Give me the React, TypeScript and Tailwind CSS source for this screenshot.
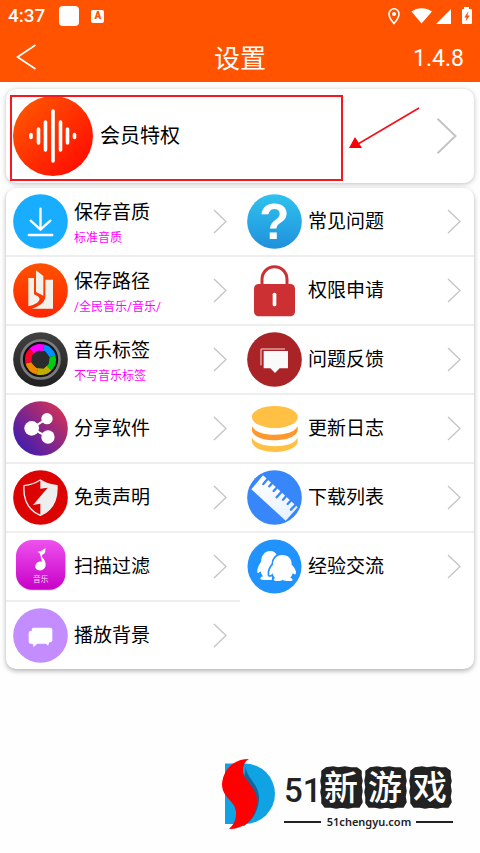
import type { ReactNode } from "react";

const cjk = "font-['Roboto','Noto_Sans_CJK_SC',sans-serif]";

function Svg({ children }: { children: ReactNode }) {
  return (
    <svg viewBox="0 0 165 165" className="size-[55px] shrink-0 overflow-visible" aria-hidden="true">
      {children}
    </svg>
  );
}

function Chevron({ className }: { className: string }) {
  return (
    <svg viewBox="0 0 14 25" className={className} fill="none" stroke="#c4c4c4" strokeWidth="1.3" aria-hidden="true">
      <path d="M1 1 L13 12.5 L1 24" />
    </svg>
  );
}

function DownloadIcon() {
  return (
    <Svg>
      <circle cx="82.5" cy="82.5" r="82" fill="#18adff" />
      <g fill="none" stroke="#fff" strokeWidth="7" strokeLinecap="round" strokeLinejoin="round">
        <path d="M82.500 44 V106 M53 80 L82.500 107 L112 80" />
        <path d="M47 123 H118" />
      </g>
    </Svg>
  );
}

function BookIcon() {
  return (
    <Svg>
      <defs>
        <linearGradient id="book" x1="0" y1="0" x2="0" y2="1">
          <stop offset="0" stopColor="#ff5200" />
          <stop offset="1" stopColor="#ff2600" />
        </linearGradient>
      </defs>
      <circle cx="82.5" cy="82.5" r="82" fill="url(#book)" />
      <g fill="#f2f2ea">
        <path d="M46 45 H63 V94 C76 100 82 104 79 111 C76 120 62 126 46 130 Z" />
        <path d="M69 22 L91 39 V98 L69 87 Z" />
        <path d="M97 50 H120 V137 H56 C80 129 95 119 97 102 Z" />
      </g>
    </Svg>
  );
}

const blades = ["#0090ff", "#00cc14", "#bdae00", "#ee8a00", "#ff0030", "#ff00ff"];

function LensIcon() {
  return (
    <Svg>
      <defs>
        <linearGradient id="lens" x1="0" y1="0" x2="0" y2="1">
          <stop offset="0" stopColor="#414141" />
          <stop offset="1" stopColor="#202020" />
        </linearGradient>
      </defs>
      <circle cx="82.5" cy="82.5" r="82" fill="url(#lens)" />
      <circle cx="82.5" cy="82.5" r="57" fill="#111" stroke="#7c7c7c" strokeWidth="8" />
      {blades.map((color, i) => (
        <circle
          key={color}
          cx="82.5"
          cy="82.5"
          r="36"
          fill="none"
          stroke={color}
          strokeWidth="21"
          pathLength="6"
          strokeDasharray="1 5"
          transform={`rotate(${i * 60 - 75} 82.5 82.5)`}
        />
      ))}
      <path d="M72 56 L96 57 L110 76 L107 96 L92 110 L70 108 L55 92 L57 70 Z" fill="#2b2b2b" />
    </Svg>
  );
}

function ShareIcon() {
  return (
    <Svg>
      <defs>
        <linearGradient id="share" x1="0.1" y1="0.9" x2="0.9" y2="0.15">
          <stop offset="0" stopColor="#3c1cb0" />
          <stop offset="0.5" stopColor="#84268a" />
          <stop offset="1" stopColor="#cf3158" />
        </linearGradient>
      </defs>
      <circle cx="82.5" cy="82.5" r="82" fill="url(#share)" />
      <path d="M102 53 L56 82 L106 109" fill="none" stroke="#fff" strokeWidth="6" />
      <g fill="#fff">
        <circle cx="56" cy="82" r="22" />
        <circle cx="102" cy="53" r="17" />
        <circle cx="105" cy="108" r="20" />
      </g>
    </Svg>
  );
}

function ShieldIcon() {
  return (
    <Svg>
      <circle cx="82.5" cy="82.5" r="82" fill="#dc0303" />
      <path
        d="M82 30 C98 40 115 45 132 47 C134 90 120 120 82 136 C44 120 30 90 33 47 C50 45 66 40 82 30 Z"
        fill="none"
        stroke="#f0f0f0"
        strokeWidth="4"
        strokeLinejoin="round"
      />
      <path d="M82 30 C98 40 115 45 132 47 C134 90 120 120 82 136 V101 L60 105 L104 53 L82 56 Z" fill="#eee" />
    </Svg>
  );
}

function MusicIcon() {
  return (
    <Svg>
      <defs>
        <linearGradient id="music" x1="0" y1="0" x2="0" y2="1">
          <stop offset="0" stopColor="#ee52ee" />
          <stop offset="1" stopColor="#c800c8" />
        </linearGradient>
      </defs>
      <rect x="9" y="6" width="148" height="149" rx="48" fill="#dcdcdc" />
      <rect x="9" y="3" width="148" height="149" rx="48" fill="url(#music)" />
      <path
        d="M74 38 C84 37 91 33 97 27 C98 38 96 46 87 47 L87 54 C94 61 99 69 98 80 C96 91 85 96 77 94 C68 92 65 84 68 77 C71 69 79 66 87 68 L81 44 Z"
        fill="#fff"
      />
      <text x="83" y="129" textAnchor="middle" fontSize="23" fill="#ffd9ff" className={cjk}>
        音乐
      </text>
    </Svg>
  );
}

function PlaybackIcon() {
  return (
    <Svg>
      <circle cx="82.5" cy="82.5" r="82" fill="#c48dff" />
      <rect x="56" y="59" width="62" height="44" rx="6" fill="#fff" />
      <rect x="47" y="69" width="60" height="38" rx="6" fill="#fff" />
      <path d="M58 104 L62 117 L75 105 Z M94 102 L105 113 L110 100 Z" fill="#fff" />
    </Svg>
  );
}

function QuestionIcon() {
  return (
    <Svg>
      <defs>
        <linearGradient id="question" x1="0" y1="0" x2="0" y2="1">
          <stop offset="0" stopColor="#2fc3ee" />
          <stop offset="1" stopColor="#2090dc" />
        </linearGradient>
      </defs>
      <circle cx="82.5" cy="82.5" r="82" fill="url(#question)" />
      <text
        x="82"
        y="136"
        textAnchor="middle"
        fontSize="148"
        fontWeight="700"
        fill="#fff"
        fontFamily="Liberation Sans, sans-serif"
      >
        ?
      </text>
    </Svg>
  );
}

function LockIcon() {
  return (
    <Svg>
      <path d="M45 68 V49 A37.500 38 0 0 1 120 49 V68" fill="none" stroke="#cc3033" strokeWidth="9" />
      <rect x="21" y="63" width="123" height="97" rx="14" fill="#cc3033" />
      <rect x="77" y="89" width="11" height="41" rx="5" fill="#fff" />
    </Svg>
  );
}

function FeedbackIcon() {
  return (
    <Svg>
      <circle cx="82.5" cy="82.5" r="82" fill="#aa2326" />
      <path d="M42 100 V51 H114" fill="none" stroke="#f4dede" strokeWidth="3" />
      <path d="M50 57 H123 V109 H98 L84 123 L70 109 H50 Z" fill="#fafafa" />
    </Svg>
  );
}

function CoinsIcon() {
  return (
    <Svg>
      <ellipse cx="83.5" cy="48" rx="69" ry="33" fill="#ffc043" />
      <path d="M16 76 C28 110 139 110 151 76 C170 132 -4 132 16 76 Z" fill="#ff982c" />
      <path d="M16 110 C28 144 139 144 151 110 C170 167 -4 167 16 110 Z" fill="#ffc043" />
    </Svg>
  );
}

function RulerIcon() {
  return (
    <Svg>
      <defs>
        <linearGradient id="ruler" x1="0.3" y1="0" x2="0.6" y2="1">
          <stop offset="0" stopColor="#fff" />
          <stop offset="1" stopColor="#e8f2ff" />
        </linearGradient>
      </defs>
      <circle cx="82.5" cy="82.5" r="82" fill="#3787fb" />
      <path d="M13 58 L48 16 L152 112 L116 152 Z" fill="url(#ruler)" />
      <g stroke="#3787fb" strokeWidth="7" strokeLinecap="round">
        <path d="M61 28 L49 42 M75 40 L67 49 M89 53 L80 63 M103 66 L89 82 M117 79 L108 89 M131 92 L122 102 M145 105 L132 119" />
      </g>
    </Svg>
  );
}

function PenguinsIcon() {
  return (
    <Svg>
      <circle cx="82.5" cy="82.5" r="81" fill="#2193ff" />
      <path
        d="M69 36 C51 37 43 52 42 68 C34 80 29 92 31 101 C34 103 38 100 41 97 C42 104 45 109 48 112 C36 116 38 123 50 123 H74 L90 50 C86 40 79 35 69 36 Z"
        fill="#fff"
      />
      <path
        d="M106 48 C87 48 78 62 78 77 C69 87 65 98 67 108 C70 110 75 106 77 103 C78 110 81 114 84 117 C77 121 80 126 90 126 C99 126 103 125 107 122 C112 126 123 127 132 126 C140 124 137 119 130 116 C134 112 136 108 137 103 C142 107 147 108 147 102 C147 93 142 84 134 77 C134 60 125 48 106 48 Z"
        fill="#fff"
        stroke="#2193ff"
        strokeWidth="10"
        paintOrder="stroke"
      />
    </Svg>
  );
}

function VipIcon() {
  return (
    <svg viewBox="0 0 80 80" className="size-20 shrink-0" aria-hidden="true">
      <defs>
        <linearGradient id="vip" x1="0.1" y1="0.1" x2="0.9" y2="0.9">
          <stop offset="0" stopColor="#ff5500" />
          <stop offset="1" stopColor="#ff0d00" />
        </linearGradient>
      </defs>
      <circle cx="40" cy="40" r="40" fill="url(#vip)" />
      <g stroke="#fff" strokeWidth="3.600" strokeLinecap="round">
        <path d="M18 38.500 V41.500 M25.500 33 V47 M32.500 26 V54 M40 15 V65 M47.500 26 V54 M54.500 33 V47 M61.500 38.500 V41.500" />
      </g>
    </svg>
  );
}

type Item = { title: string; note?: string; icon: ReactNode };

const left: Item[] = [
  { title: "保存音质", note: "标准音质", icon: <DownloadIcon /> },
  { title: "保存路径", note: "/全民音乐/音乐/", icon: <BookIcon /> },
  { title: "音乐标签", note: "不写音乐标签", icon: <LensIcon /> },
  { title: "分享软件", icon: <ShareIcon /> },
  { title: "免责声明", icon: <ShieldIcon /> },
  { title: "扫描过滤", icon: <MusicIcon /> },
  { title: "播放背景", icon: <PlaybackIcon /> },
];

const right: Item[] = [
  { title: "常见问题", icon: <QuestionIcon /> },
  { title: "权限申请", icon: <LockIcon /> },
  { title: "问题反馈", icon: <FeedbackIcon /> },
  { title: "更新日志", icon: <CoinsIcon /> },
  { title: "下载列表", icon: <RulerIcon /> },
  { title: "经验交流", icon: <PenguinsIcon /> },
];

function Column({ items }: { items: Item[] }) {
  return (
    <div className="divide-y-2 divide-[#eeeeee]">
      {items.map((item) => (
        <button
          key={item.title}
          type="button"
          className="flex h-[69px] w-full items-center gap-1.5 pl-[7px] pr-[13px] text-left last:h-[67px]"
        >
          {item.icon}
          {item.note ? (
            <span className="flex-1 pt-1">
              <span className="block text-[19px] leading-7">{item.title}</span>
              <span className="block text-xs leading-[22px] text-[#ff00ff]">{item.note}</span>
            </span>
          ) : (
            <span className="flex-1 text-[19px] leading-7">{item.title}</span>
          )}
          <Chevron className="h-[25px] w-3.5" />
        </button>
      ))}
    </div>
  );
}

function StatusBar() {
  return (
    <div className="flex h-8 items-center px-2">
      <span className="text-[19px] font-medium leading-8">4:37</span>
      <span className="ml-3.5 size-5 rounded bg-white" />
      <span className="ml-3 flex size-[13px] items-center justify-center rounded-xs bg-white text-[10px] font-black leading-none text-[#ff5300]">
        A
      </span>
      <svg viewBox="0 0 84 18" className="ml-auto h-[18px] w-[84px]" fill="#fff" aria-hidden="true">
        <path
          d="M6 1.800 A5 5 0 0 0 1 7 C1 11 6 16.500 6 16.500 C6 16.500 11 11 11 7 A5 5 0 0 0 6 1.800 Z"
          fill="none"
          stroke="#fff"
          strokeWidth="1.600"
        />
        <circle cx="6" cy="7" r="2" />
        <path d="M23.500 4.500 C29 0 38 0 44 4.500 L33.500 16.500 Z" />
        <path d="M63 2 V17 H48 Z" />
        <path d="M76 0 H81 V2 H83 Q84 2 84 3 V16 Q84 17 83 17 H75 Q74 17 74 16 V3 Q74 2 75 2 H76 Z" />
        <path d="M80.500 4 L76.300 10.500 H78.500 L77.500 14.500 L81.800 8.500 H79.400 Z" fill="#ff5300" />
      </svg>
    </div>
  );
}

const tiles = [
  { char: "新", x: 99 },
  { char: "游", x: 143 },
  { char: "戏", x: 188 },
];

function SiteLogo() {
  return (
    <svg viewBox="0 0 234 74" className="h-[74px] w-[234px]" role="img" aria-label="51新游戏">
      <path d="M3 6.500 H22.500 A30.500 30.250 0 0 1 22.500 67 H3 Z" fill="#10a3e4" />
      <path d="M24 8 C22 20 38 26 37 43 C36 55 30 64 22 69 L16 66 Z" fill="#14659b" />
      <path
        d="M27 2 C10 2 1 14 0 27 C0 42 15 44 14 57 C14 65 10 69 7 72 C24 72 35 60 35 43 C34 29 21 23 21 14 C21 8 23 4 27 2 Z"
        fill="#ff0000"
      />
      <text x="62" y="45" fontSize="33" fontWeight="500" fill="#222" className={cjk}>
        51
      </text>
      {tiles.map((tile) => (
        <g key={tile.char} transform={`translate(${tile.x} 10)`}>
          <path
            d="M5 1 L12 0 L17 1 L24 0 L30 1 L36 1 L40 4 L40 9 L41 14 L40 18 L41 24 L40 30 L41 35 L38 40 L32 40 L27 41 L21 40 L15 41 L10 40 L4 40 L1 36 L1 30 L0 25 L1 20 L0 14 L1 9 L1 4 Z"
            fill="#222"
            stroke="#222"
            strokeWidth="1.500"
            strokeLinejoin="round"
          />
          <text x="20" y="33" textAnchor="middle" fontSize="34" fontWeight="500" fill="#fff" className={cjk}>
            {tile.char}
          </text>
        </g>
      ))}
      <path d="M62 65 H99 M194 65 H231" stroke="#222" strokeWidth="2" />
      <text x="147" y="69" textAnchor="middle" fontSize="11" fontWeight="600" fill="#222" fontFamily="Noto Sans, sans-serif">
        51chengyu.com
      </text>
    </svg>
  );
}

export default function App() {
  return (
    <div className={`min-h-screen bg-[#fefefe] text-black ${cjk}`}>
      <header className="bg-[#ff5300] text-white">
        <StatusBar />
        <div className="grid h-[50px] grid-cols-3 items-center px-4">
          <button type="button" aria-label="返回" className="justify-self-start">
            <svg viewBox="0 0 20 26" className="h-[26px] w-5" fill="none" stroke="#fff" strokeWidth="1.700" aria-hidden="true">
              <path d="M19.500 1 L1.500 13 L19.500 25" />
            </svg>
          </button>
          <h1 className="pt-1 text-center text-[26px] leading-8">设置</h1>
          <span className="pt-1 text-right text-[23px] leading-8">1.4.8</span>
        </div>
      </header>

      <main className="flex flex-col gap-[5px] px-1.5 pt-[7px]">
        <section className="relative rounded-[10px] bg-white shadow-[0_1px_5px_rgba(0,0,0,0.25)]">
          <button type="button" className="flex h-[94px] w-full items-center gap-[7px] pl-[7px] pr-[17px] text-left">
            <VipIcon />
            <span className="flex-1 text-[20px] leading-7">会员特权</span>
            <Chevron className="h-[38px] w-[21px]" />
          </button>
          {/* highlight frame and pointer */}
          <div className="pointer-events-none absolute inset-y-0 left-1 flex items-center pt-[3px]">
            <div className="h-[86px] w-[333px] border-2 border-[#f5191f]" />
            <svg viewBox="0 0 72 44" className="mb-5 ml-1.5 h-11 w-[72px]" aria-hidden="true">
              <path d="M70 2 L9 38" stroke="#f5101a" strokeWidth="1.600" />
              <path d="M0 42 L6 31 L13 42 Z" fill="#f90008" />
            </svg>
          </div>
        </section>

        <section className="grid grid-cols-2 rounded-[10px] bg-white shadow-[0_2px_5px_rgba(0,0,0,0.3)]">
          <Column items={left} />
          <Column items={right} />
        </section>
      </main>

      <footer className="flex justify-end pb-5 pr-6 pt-[88px]">
        <SiteLogo />
      </footer>
    </div>
  );
}
